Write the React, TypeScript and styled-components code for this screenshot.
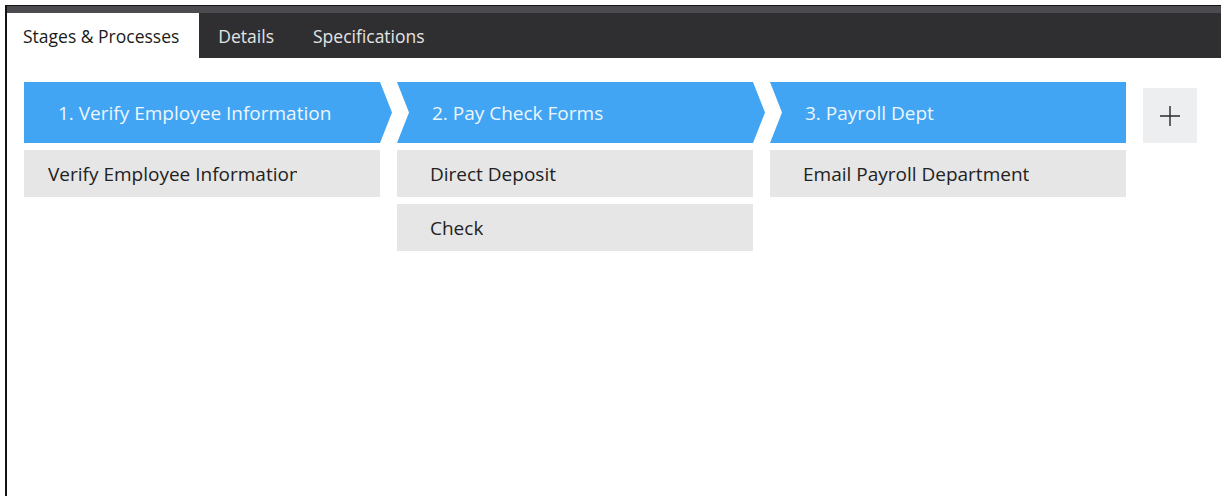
import React from "react";
import styled, { createGlobalStyle, css } from "styled-components";

const GlobalStyle = createGlobalStyle`
  html, body {
    margin: 0;
    padding: 0;
    background: #fff;
  }
  body {
    font-family: "Open Sans", "Noto Sans", "Liberation Sans", sans-serif;
  }
`;

const Frame = styled.div`
  margin: 5px 0 0 5px;
  min-height: calc(100vh - 5px);
  box-sizing: border-box;
  border-top: 1px solid #141414;
  border-left: 2px solid #141414;
`;

const TabBar = styled.div`
  display: flex;
  align-items: flex-end;
  height: 52px;
  box-sizing: border-box;
  padding-top: 7px;
  background: linear-gradient(#4b4b50 0, #4b4b50 7px, #2f2f31 7px);
`;

const Tab = styled.div<{ $active?: boolean }>`
  display: flex;
  align-items: center;
  height: 45px;
  padding: 0 20px 0 19px;
  font-size: 17.5px;
  color: #e4e4e4;

  ${(p) =>
    p.$active &&
    css`
      padding-left: 16px;
      background: #fff;
      color: #1b1b1b;
    `}
`;

const Board = styled.div`
  display: flex;
  align-items: flex-start;
  gap: 17px;
  padding: 24px 0 0 17px;
`;

const Column = styled.div`
  display: flex;
  flex-direction: column;
  gap: 7px;
  width: 356px;
`;

const TIP = 12;

const StageHeader = styled.div<{ $first?: boolean; $last?: boolean }>`
  display: flex;
  align-items: center;
  height: 61px;
  box-sizing: border-box;
  padding-left: ${(p) => (p.$first ? 34 : 35)}px;
  width: ${(p) => (p.$last ? "100%" : `calc(100% + ${TIP}px)`)};
  margin-right: ${(p) => (p.$last ? 0 : -TIP)}px;
  background: #41a5f3;
  color: #eef6fe;
  font-size: 19px;
  clip-path: ${(p) => {
    const left = p.$first ? "0 100%" : `0 100%, ${TIP}px 50%`;
    const right = p.$last
      ? "100% 0, 100% 100%"
      : `calc(100% - ${TIP}px) 0, 100% 50%, calc(100% - ${TIP}px) 100%`;
    return `polygon(0 0, ${right}, ${left})`;
  }};
`;

const Step = styled.div<{ $first?: boolean }>`
  display: flex;
  align-items: center;
  height: 47px;
  box-sizing: border-box;
  padding-left: ${(p) => (p.$first ? 24 : 33)}px;
  background: #e6e6e6;
  color: #222;
  font-size: 19px;
  white-space: nowrap;
`;

// the first stage's step label is cut off by a fixed-width box
const StepLabel = styled.span<{ $clip?: number }>`
  display: block;
  overflow: hidden;
  ${(p) => p.$clip && `width: ${p.$clip}px;`}
`;

const AddButton = styled.button`
  display: flex;
  align-items: center;
  justify-content: center;
  width: 54px;
  height: 55px;
  margin-top: 6px;
  padding: 0;
  border: none;
  background: #eceef0;
  cursor: pointer;
`;

const stages = [
  { title: "1. Verify Employee Information", steps: ["Verify Employee Information"] },
  { title: "2. Pay Check Forms", steps: ["Direct Deposit", "Check"] },
  { title: "3. Payroll Dept", steps: ["Email Payroll Department"] },
];

export default function App() {
  return (
    <>
      <GlobalStyle />
      <Frame>
        <TabBar>
          <Tab $active>Stages &amp; Processes</Tab>
          <Tab>Details</Tab>
          <Tab>Specifications</Tab>
        </TabBar>
        <Board>
          {stages.map((stage, i) => (
            <Column key={stage.title}>
              <StageHeader $first={i === 0} $last={i === stages.length - 1}>
                {stage.title}
              </StageHeader>
              {stage.steps.map((step) => (
                <Step key={step} $first={i === 0}>
                  <StepLabel $clip={i === 0 ? 249 : undefined}>{step}</StepLabel>
                </Step>
              ))}
            </Column>
          ))}
          <AddButton aria-label="Add stage">
            <svg width="22" height="22" viewBox="0 0 22 22">
              <path d="M11 1v20M1 11h20" stroke="#2a2a2a" strokeWidth="1.4" fill="none" />
            </svg>
          </AddButton>
        </Board>
      </Frame>
    </>
  );
}
